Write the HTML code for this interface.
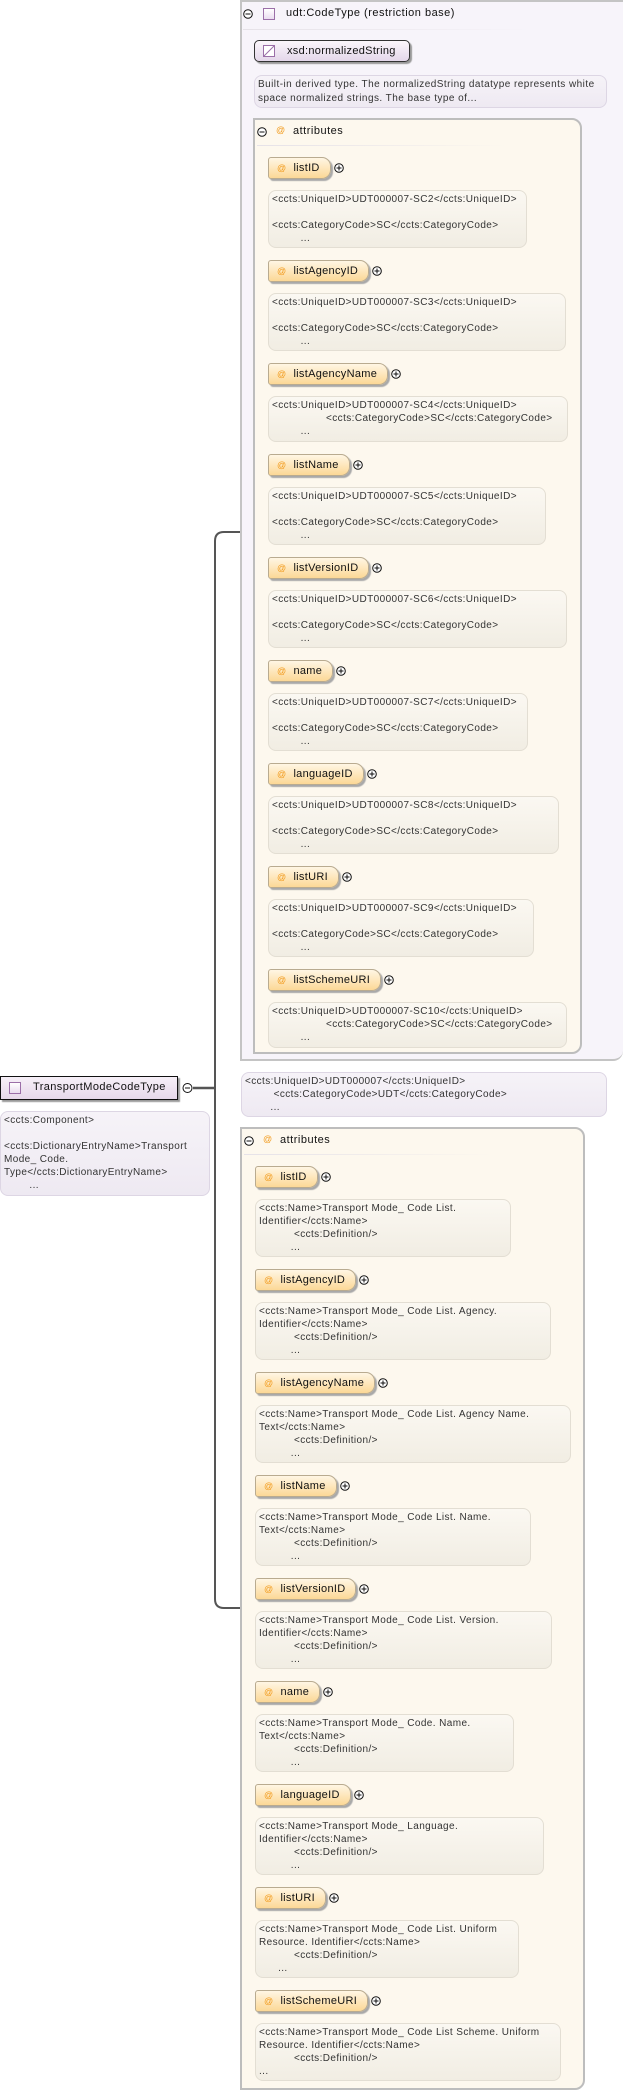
<!DOCTYPE html>
<html><head><meta charset="utf-8">
<style>
*{box-sizing:border-box;margin:0;padding:0}
body{width:623px;height:2092px;background:#fff;position:relative;overflow:hidden;font-family:"Liberation Sans","DejaVu Sans",sans-serif;color:#222}
.a{position:absolute}
.outer{background:#f7f4fa;border:2px solid #c4c4c4;border-right:none}
.attrbox{background:#fdf8ee;border:2px solid #bdbdbd;border-radius:0 10px 10px 0}
.doc{position:absolute;border:1px solid #e3ded3;border-radius:8px;background:linear-gradient(#fbf8f2,#f1ede3);font-size:10px;letter-spacing:0.4px;line-height:13px;padding:2px 3px;white-space:pre;color:#333;overflow:hidden}
.pdoc{background:linear-gradient(#f6f3f8,#eee9f2);border-color:#ddd6e4}
.pw{position:absolute;display:flex;align-items:center;gap:3px;height:22px}
.pill{height:22px;border:1px solid #b9ab90;border-radius:3px 9px 9px 3px;background:linear-gradient(#fff6e4,#fcd896);box-shadow:2px 2px 1px #a9a9a9;font-size:11px;letter-spacing:0.3px;line-height:20px;padding:0 10px 0 8px;white-space:nowrap;color:#111}
.pill i{font-style:normal;color:#f29b1d;font-size:9px;margin-right:7px}
.pl{position:absolute;width:10px;height:10px}
.hdr{font-size:11px;letter-spacing:0.5px;position:absolute;white-space:nowrap;color:#111}
.line{position:absolute;height:1px;background:linear-gradient(90deg,#e6e2e8,rgba(255,255,255,0))}
</style></head><body>

<svg class="a" style="left:0;top:0" width="623" height="2092">
<path d="M240 532 H224 Q215 532 215 541 V1599 Q215 1608 224 1608 H240" fill="none" stroke="#555" stroke-width="2"/>
<path d="M193 1088 H215" stroke="#555" stroke-width="2.5"/>
<circle cx="187.5" cy="1088" r="4.5" fill="#fff" stroke="#111" stroke-width="1"/><path d="M185 1088h5" stroke="#111"/>
</svg>

<div class="a" style="left:0;top:1076px;width:178px;height:24px;border:1.5px solid #111;background:linear-gradient(#f7f0f8,#e6d8ea);box-shadow:2px 2px 1px #999;font-size:11px;letter-spacing:0.4px;line-height:21px;padding-left:32px;color:#111">TransportModeCodeType</div>
<div class="a" style="left:9px;top:1082px;width:12px;height:12px;border:1px solid #9b6fa8;background:linear-gradient(#fff,#e9dcef)"></div>
<div class="doc pdoc" style="left:0;top:1111px;width:210px;height:85px">&lt;ccts:Component&gt;

&lt;ccts:DictionaryEntryName&gt;Transport
Mode_ Code.
Type&lt;/ccts:DictionaryEntryName&gt;
        ...</div>

<div class="a outer" style="left:240px;top:0;width:383px;height:1061px;border-bottom:2px solid #c4c4c4;border-radius:0 0 10px 0"></div>
<svg class="pl" style="left:243px;top:9px"><circle cx="5" cy="5" r="4.3" fill="#fff" stroke="#111"/><path d="M2.5 5h5" stroke="#111"/></svg>
<div class="a" style="left:263px;top:8px;width:12px;height:12px;border:1px solid #9b6fa8;background:linear-gradient(#fff,#eadcf0)"></div>
<div class="hdr" style="left:286px;top:7px">udt:CodeType (restriction base)</div>
<div class="line" style="left:243px;top:29px;width:290px"></div>
<div class="a" style="left:254px;top:40px;width:156px;height:22px;border:1px solid #333;border-radius:5px;background:linear-gradient(#fbf6fb,#e4d7ea);box-shadow:2px 2px 1px #999;font-size:11px;letter-spacing:0.3px;line-height:20px;padding-left:32px;color:#111">xsd:normalizedString</div>
<svg class="a" style="left:263px;top:45px" width="12" height="12"><rect x="0.5" y="0.5" width="11" height="11" fill="#fff" stroke="#9b6fa8"/><path d="M1 11L11 1" stroke="#9b6fa8"/></svg>
<div class="doc pdoc" style="left:254px;top:75px;width:353px;height:33px;line-height:13.5px;letter-spacing:0.45px">Built-in derived type. The normalizedString datatype represents white
space normalized strings. The base type of...</div>

<div class="a attrbox" style="left:253px;top:118px;width:329px;height:936px"></div>
<svg class="pl" style="left:257px;top:127px"><circle cx="5" cy="5" r="4.3" fill="#fff" stroke="#111"/><path d="M2.5 5h5" stroke="#111"/></svg>
<div class="a" style="left:276px;top:125px;font-size:9px;color:#f29b1d">@</div>
<div class="hdr" style="left:293px;top:125px">attributes</div>
<div class="line" style="left:257px;top:145px;width:250px"></div>

<div class="pw" style="left:268px;top:157px"><div class="pill"><i>@</i>listID</div><svg width="10" height="10"><circle cx="5" cy="5" r="4.3" fill="#fff" stroke="#111"/><path d="M2.5 5h5M5 2.5v5" stroke="#111"/></svg></div>
<div class="doc" style="left:268px;top:190px;width:259px;height:58px">&lt;ccts:UniqueID&gt;UDT000007-SC2&lt;/ccts:UniqueID&gt;

&lt;ccts:CategoryCode&gt;SC&lt;/ccts:CategoryCode&gt;
         ...</div>
<div class="pw" style="left:268px;top:260px"><div class="pill"><i>@</i>listAgencyID</div><svg width="10" height="10"><circle cx="5" cy="5" r="4.3" fill="#fff" stroke="#111"/><path d="M2.5 5h5M5 2.5v5" stroke="#111"/></svg></div>
<div class="doc" style="left:268px;top:293px;width:298px;height:58px">&lt;ccts:UniqueID&gt;UDT000007-SC3&lt;/ccts:UniqueID&gt;

&lt;ccts:CategoryCode&gt;SC&lt;/ccts:CategoryCode&gt;
         ...</div>
<div class="pw" style="left:268px;top:363px"><div class="pill"><i>@</i>listAgencyName</div><svg width="10" height="10"><circle cx="5" cy="5" r="4.3" fill="#fff" stroke="#111"/><path d="M2.5 5h5M5 2.5v5" stroke="#111"/></svg></div>
<div class="doc" style="left:268px;top:396px;width:300px;height:46px">&lt;ccts:UniqueID&gt;UDT000007-SC4&lt;/ccts:UniqueID&gt;
                 &lt;ccts:CategoryCode&gt;SC&lt;/ccts:CategoryCode&gt;
         ...</div>
<div class="pw" style="left:268px;top:454px"><div class="pill"><i>@</i>listName</div><svg width="10" height="10"><circle cx="5" cy="5" r="4.3" fill="#fff" stroke="#111"/><path d="M2.5 5h5M5 2.5v5" stroke="#111"/></svg></div>
<div class="doc" style="left:268px;top:487px;width:278px;height:58px">&lt;ccts:UniqueID&gt;UDT000007-SC5&lt;/ccts:UniqueID&gt;

&lt;ccts:CategoryCode&gt;SC&lt;/ccts:CategoryCode&gt;
         ...</div>
<div class="pw" style="left:268px;top:557px"><div class="pill"><i>@</i>listVersionID</div><svg width="10" height="10"><circle cx="5" cy="5" r="4.3" fill="#fff" stroke="#111"/><path d="M2.5 5h5M5 2.5v5" stroke="#111"/></svg></div>
<div class="doc" style="left:268px;top:590px;width:299px;height:58px">&lt;ccts:UniqueID&gt;UDT000007-SC6&lt;/ccts:UniqueID&gt;

&lt;ccts:CategoryCode&gt;SC&lt;/ccts:CategoryCode&gt;
         ...</div>
<div class="pw" style="left:268px;top:660px"><div class="pill"><i>@</i>name</div><svg width="10" height="10"><circle cx="5" cy="5" r="4.3" fill="#fff" stroke="#111"/><path d="M2.5 5h5M5 2.5v5" stroke="#111"/></svg></div>
<div class="doc" style="left:268px;top:693px;width:260px;height:58px">&lt;ccts:UniqueID&gt;UDT000007-SC7&lt;/ccts:UniqueID&gt;

&lt;ccts:CategoryCode&gt;SC&lt;/ccts:CategoryCode&gt;
         ...</div>
<div class="pw" style="left:268px;top:763px"><div class="pill"><i>@</i>languageID</div><svg width="10" height="10"><circle cx="5" cy="5" r="4.3" fill="#fff" stroke="#111"/><path d="M2.5 5h5M5 2.5v5" stroke="#111"/></svg></div>
<div class="doc" style="left:268px;top:796px;width:291px;height:58px">&lt;ccts:UniqueID&gt;UDT000007-SC8&lt;/ccts:UniqueID&gt;

&lt;ccts:CategoryCode&gt;SC&lt;/ccts:CategoryCode&gt;
         ...</div>
<div class="pw" style="left:268px;top:866px"><div class="pill"><i>@</i>listURI</div><svg width="10" height="10"><circle cx="5" cy="5" r="4.3" fill="#fff" stroke="#111"/><path d="M2.5 5h5M5 2.5v5" stroke="#111"/></svg></div>
<div class="doc" style="left:268px;top:899px;width:266px;height:58px">&lt;ccts:UniqueID&gt;UDT000007-SC9&lt;/ccts:UniqueID&gt;

&lt;ccts:CategoryCode&gt;SC&lt;/ccts:CategoryCode&gt;
         ...</div>
<div class="pw" style="left:268px;top:969px"><div class="pill"><i>@</i>listSchemeURI</div><svg width="10" height="10"><circle cx="5" cy="5" r="4.3" fill="#fff" stroke="#111"/><path d="M2.5 5h5M5 2.5v5" stroke="#111"/></svg></div>
<div class="doc" style="left:268px;top:1002px;width:299px;height:46px">&lt;ccts:UniqueID&gt;UDT000007-SC10&lt;/ccts:UniqueID&gt;
                 &lt;ccts:CategoryCode&gt;SC&lt;/ccts:CategoryCode&gt;
         ...</div>

<div class="doc pdoc" style="left:241px;top:1072px;width:366px;height:45px">&lt;ccts:UniqueID&gt;UDT000007&lt;/ccts:UniqueID&gt;
         &lt;ccts:CategoryCode&gt;UDT&lt;/ccts:CategoryCode&gt;
        ...</div>
<div class="a attrbox" style="left:240px;top:1127px;width:345px;height:963px"></div>
<svg class="pl" style="left:244px;top:1136px"><circle cx="5" cy="5" r="4.3" fill="#fff" stroke="#111"/><path d="M2.5 5h5" stroke="#111"/></svg>
<div class="a" style="left:263px;top:1134px;font-size:9px;color:#f29b1d">@</div>
<div class="hdr" style="left:280px;top:1134px">attributes</div>
<div class="line" style="left:244px;top:1154px;width:250px"></div>

<div class="pw" style="left:255px;top:1166px"><div class="pill"><i>@</i>listID</div><svg width="10" height="10"><circle cx="5" cy="5" r="4.3" fill="#fff" stroke="#111"/><path d="M2.5 5h5M5 2.5v5" stroke="#111"/></svg></div>
<div class="doc" style="left:255px;top:1199px;width:256px;height:58px">&lt;ccts:Name&gt;Transport Mode_ Code List.
Identifier&lt;/ccts:Name&gt;
           &lt;ccts:Definition/&gt;
          ...</div>
<div class="pw" style="left:255px;top:1269px"><div class="pill"><i>@</i>listAgencyID</div><svg width="10" height="10"><circle cx="5" cy="5" r="4.3" fill="#fff" stroke="#111"/><path d="M2.5 5h5M5 2.5v5" stroke="#111"/></svg></div>
<div class="doc" style="left:255px;top:1302px;width:296px;height:58px">&lt;ccts:Name&gt;Transport Mode_ Code List. Agency.
Identifier&lt;/ccts:Name&gt;
           &lt;ccts:Definition/&gt;
          ...</div>
<div class="pw" style="left:255px;top:1372px"><div class="pill"><i>@</i>listAgencyName</div><svg width="10" height="10"><circle cx="5" cy="5" r="4.3" fill="#fff" stroke="#111"/><path d="M2.5 5h5M5 2.5v5" stroke="#111"/></svg></div>
<div class="doc" style="left:255px;top:1405px;width:316px;height:58px">&lt;ccts:Name&gt;Transport Mode_ Code List. Agency Name.
Text&lt;/ccts:Name&gt;
           &lt;ccts:Definition/&gt;
          ...</div>
<div class="pw" style="left:255px;top:1475px"><div class="pill"><i>@</i>listName</div><svg width="10" height="10"><circle cx="5" cy="5" r="4.3" fill="#fff" stroke="#111"/><path d="M2.5 5h5M5 2.5v5" stroke="#111"/></svg></div>
<div class="doc" style="left:255px;top:1508px;width:276px;height:58px">&lt;ccts:Name&gt;Transport Mode_ Code List. Name.
Text&lt;/ccts:Name&gt;
           &lt;ccts:Definition/&gt;
          ...</div>
<div class="pw" style="left:255px;top:1578px"><div class="pill"><i>@</i>listVersionID</div><svg width="10" height="10"><circle cx="5" cy="5" r="4.3" fill="#fff" stroke="#111"/><path d="M2.5 5h5M5 2.5v5" stroke="#111"/></svg></div>
<div class="doc" style="left:255px;top:1611px;width:297px;height:58px">&lt;ccts:Name&gt;Transport Mode_ Code List. Version.
Identifier&lt;/ccts:Name&gt;
           &lt;ccts:Definition/&gt;
          ...</div>
<div class="pw" style="left:255px;top:1681px"><div class="pill"><i>@</i>name</div><svg width="10" height="10"><circle cx="5" cy="5" r="4.3" fill="#fff" stroke="#111"/><path d="M2.5 5h5M5 2.5v5" stroke="#111"/></svg></div>
<div class="doc" style="left:255px;top:1714px;width:259px;height:58px">&lt;ccts:Name&gt;Transport Mode_ Code. Name.
Text&lt;/ccts:Name&gt;
           &lt;ccts:Definition/&gt;
          ...</div>
<div class="pw" style="left:255px;top:1784px"><div class="pill"><i>@</i>languageID</div><svg width="10" height="10"><circle cx="5" cy="5" r="4.3" fill="#fff" stroke="#111"/><path d="M2.5 5h5M5 2.5v5" stroke="#111"/></svg></div>
<div class="doc" style="left:255px;top:1817px;width:289px;height:58px">&lt;ccts:Name&gt;Transport Mode_ Language.
Identifier&lt;/ccts:Name&gt;
           &lt;ccts:Definition/&gt;
          ...</div>
<div class="pw" style="left:255px;top:1887px"><div class="pill"><i>@</i>listURI</div><svg width="10" height="10"><circle cx="5" cy="5" r="4.3" fill="#fff" stroke="#111"/><path d="M2.5 5h5M5 2.5v5" stroke="#111"/></svg></div>
<div class="doc" style="left:255px;top:1920px;width:264px;height:58px">&lt;ccts:Name&gt;Transport Mode_ Code List. Uniform
Resource. Identifier&lt;/ccts:Name&gt;
           &lt;ccts:Definition/&gt;
      ...</div>
<div class="pw" style="left:255px;top:1990px"><div class="pill"><i>@</i>listSchemeURI</div><svg width="10" height="10"><circle cx="5" cy="5" r="4.3" fill="#fff" stroke="#111"/><path d="M2.5 5h5M5 2.5v5" stroke="#111"/></svg></div>
<div class="doc" style="left:255px;top:2023px;width:306px;height:58px">&lt;ccts:Name&gt;Transport Mode_ Code List Scheme. Uniform
Resource. Identifier&lt;/ccts:Name&gt;
           &lt;ccts:Definition/&gt;
...</div>
</body></html>
